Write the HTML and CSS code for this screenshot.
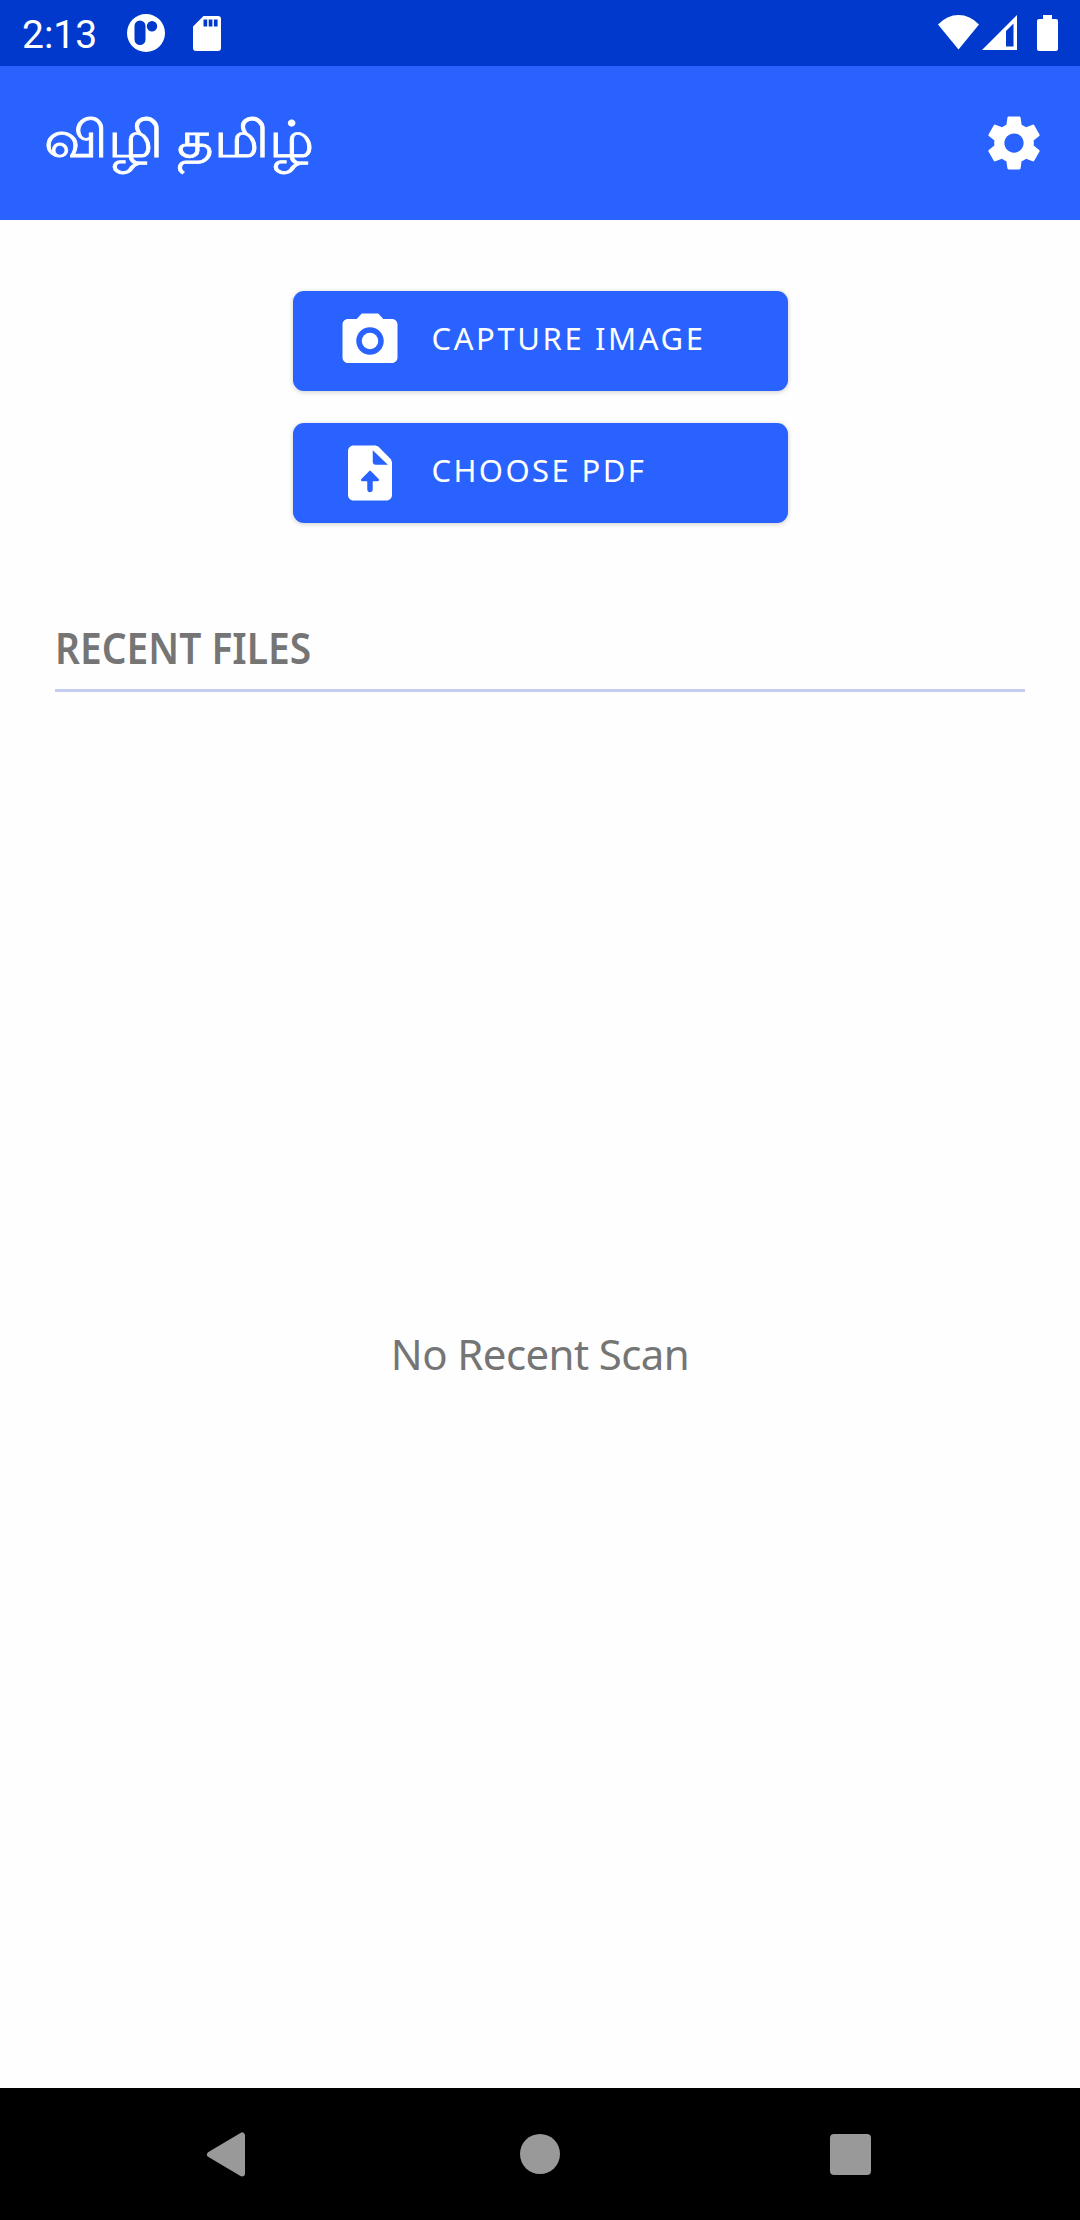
FILE: index.html
```html
<!DOCTYPE html>
<html lang="ta">
<head>
<meta charset="utf-8">
<title>விழி தமிழ்</title>
<link rel="stylesheet" href="styles.css">
</head>
<body>
<div class="screen">
  <div class="status-bar">
    <span class="clock">2:13</span>
    <svg class="status-app" viewBox="0 0 38 38"><path fill="#fff" fill-rule="evenodd" d="M19 0a19 19 0 1 1 0 38a19 19 0 1 1 0-38zM13 6.5a5.5 5.5 0 0 0-5.500 5.500v13.500a5.500 5.500 0 0 0 11 0v-13.500a5.500 5.500 0 0 0-5.500-5.500zM25 7a5.200 5.200 0 1 0 0 10.400a5.200 5.200 0 1 0 0-10.400z"/></svg>
    <svg class="status-card" viewBox="0 0 28 35"><path fill="#fff" fill-rule="evenodd" d="M10.500 0H25a3 3 0 0 1 3 3v29a3 3 0 0 1-3 3H3a3 3 0 0 1-3-3V10.500zM10.500 3.500v7h3.700v-7zM15.700 3.500v7h3.700v-7zM20.900 3.500v7h3.700v-7z"/></svg>
    <span class="spacer"></span>
    <svg class="wifi" viewBox="0 0 41 35"><path fill="#fff" d="M0 9.500Q9 0 20.500 0T41 9.500L20.500 34.500z"/></svg>
    <svg class="signal" viewBox="0 0 35 35"><path fill="#fff" fill-rule="evenodd" d="M35 0v35H0zM31.500 8.500l-7.500 7.500v15.500h7.500z"/></svg>
    <svg class="battery" viewBox="0 0 21 36"><path fill="#fff" d="M6 0h9v4h4a2 2 0 0 1 2 2v28a2 2 0 0 1-2 2H2a2 2 0 0 1-2-2V6a2 2 0 0 1 2-2h4z"/></svg>
  </div>

  <header class="app-bar">
    <h1 class="app-title">விழி தமிழ்</h1>
    <svg class="icon" viewBox="0 0 24 24"><path fill="#fff" d="M19.140 12.940c.040-.3.060-.61.060-.94 0-.32-.020-.64-.070-.94l2.030-1.580c.18-.14.23-.41.120-.61l-1.920-3.320c-.12-.22-.37-.29-.59-.22l-2.390.96c-.5-.38-1.030-.7-1.620-.94l-.36-2.540c-.040-.24-.24-.41-.48-.41h-3.840c-.24 0-.43.17-.47.41l-.36 2.540c-.59.24-1.130.57-1.620.94l-2.390-.96c-.22-.080-.47 0-.59.22L2.740 8.870c-.12.21-.080.47.120.61l2.030 1.580c-.050.3-.090.63-.090.94s.020.64.070.94l-2.030 1.580c-.18.14-.23.41-.12.61l1.920 3.320c.12.22.37.29.59.22l2.390-.96c.5.38 1.030.7 1.620.94l.36 2.540c.050.24.24.41.48.41h3.840c.24 0 .44-.17.47-.41l.36-2.540c.59-.24 1.130-.56 1.620-.94l2.390.96c.22.080.47 0 .59-.22l1.920-3.320c.12-.22.070-.47-.12-.61l-2.010-1.580zM12 15.500c-1.930 0-3.500-1.570-3.500-3.500s1.570-3.500 3.500-3.500 3.500 1.570 3.500 3.500-1.570 3.500-3.500 3.500z"/></svg>
  </header>

  <main class="content">
    <div class="actions">
      <button class="action">
        <svg class="icon" viewBox="0 0 24 24"><circle cx="12" cy="12" r="3" fill="#fff"/><path fill="#fff" d="M9 2L7.170 4H4c-1.100 0-2 .9-2 2v12c0 1.100.9 2 2 2h16c1.100 0 2-.9 2-2V6c0-1.100-.9-2-2-2h-3.170L15 2H9zm3 15c-2.760 0-5-2.240-5-5s2.240-5 5-5 5 2.240 5 5-2.240 5-5 5z"/></svg>
        <span class="action-label">CAPTURE IMAGE</span>
      </button>
      <button class="action">
        <svg class="icon" viewBox="0 0 24 24"><path fill="#fff" d="M14 2H6c-1.100 0-1.990.9-1.990 2L4 20c0 1.100.89 2 1.990 2H18c1.100 0 2-.9 2-2V8l-6-6zm-1 6V3.700L18.500 9H14c-.55 0-1-.45-1-1zM13 15v3c0 .55-.45 1-1 1s-1-.45-1-1v-3H9.210c-.45 0-.67-.54-.35-.85l2.800-2.790c.2-.19.510-.19.710 0l2.790 2.790c.3.310.080.850-.37.850H13z"/><path fill="#fff" d="M14 2l1 .4L19.600 7 20 8.500h-1.500L13 3z"/></svg>
        <span class="action-label choose">CHOOSE PDF</span>
      </button>
    </div>
    <h2 class="section-title"><span class="section-label">RECENT FILES</span></h2>
    <div class="empty"><p class="empty-text">No Recent Scan</p></div>
  </main>

  <nav class="nav-bar">
    <svg class="nav-icon" viewBox="0 0 60 60"><path fill="#999" stroke="#999" stroke-width="6" stroke-linejoin="round" d="M14 30.500L46 11.500v38z"/></svg>
    <svg class="nav-icon" viewBox="0 0 60 60"><circle cx="30" cy="30" r="20" fill="#999"/></svg>
    <svg class="nav-icon" viewBox="0 0 60 60"><rect x="9" y="10" width="41" height="41" rx="4" fill="#999"/></svg>
  </nav>
</div>
</body>
</html>
```
FILE: styles.css
```css
* { box-sizing: border-box; }

body {
  margin: 0;
  background: #fefefe;
  font-family: "Noto Sans", sans-serif;
}

h1, h2, p { margin: 0; font-weight: 400; }
svg { display: block; flex: none; }

.screen {
  width: 1080px;
  height: 2220px;
  display: flex;
  flex-direction: column;
}

.status-bar {
  height: 66px;
  display: flex;
  align-items: flex-start;
  padding: 14px 22px 0;
  background: #0039cb;
  color: #fff;
}
.clock {
  width: 105px;
  font: 400 39px/42px Roboto, sans-serif;
}
.status-app { width: 38px; height: 38px; }
.status-card { width: 28px; height: 35px; margin: 2px 0 0 28px; }
.spacer { flex: 1; }
.wifi { width: 41px; height: 35px; margin-top: 1px; }
.signal { width: 35px; height: 35px; margin: 1px 20px 0 3px; }
.battery { width: 21px; height: 36px; margin-top: 1px; }

.app-bar {
  height: 154px;
  display: flex;
  align-items: center;
  justify-content: space-between;
  padding: 0 33px 0 44px;
  background: #2962ff;
  color: #fff;
}
.app-title {
  padding-bottom: 13px;
  font-size: 51px;
  line-height: 80px;
  transform: scaleX(1.1);
  transform-origin: left;
  -webkit-text-stroke: .8px #fff;
}
.icon { width: 66px; height: 66px; }

.content {
  flex: 1;
  display: flex;
  flex-direction: column;
  padding: 71px 55px 0;
}
.actions {
  display: flex;
  flex-direction: column;
  align-items: center;
  gap: 32px;
}
.action {
  width: 495px;
  height: 100px;
  display: flex;
  align-items: center;
  gap: 29px;
  padding: 0 0 0 44px;
  border: 0;
  border-radius: 11px;
  background: #2962ff;
  color: #fff;
  font: 400 31px/40px "Noto Sans", sans-serif;
  box-shadow: 0 1px 5px rgba(0, 0, 0, .2);
}
.action-label { letter-spacing: 2.600px; padding-bottom: 6px; }
.choose { letter-spacing: 2.400px; }

.section-title {
  height: 101px;
  margin-top: 68px;
  padding-top: 27px;
  border-bottom: 3px solid #c5cdf0;
  color: #757575;
  font-size: 43px;
  font-weight: 600;
  line-height: 60px;
}
.section-label {
  display: inline-block;
  transform: scaleX(.905);
  transform-origin: left;
}

.empty {
  flex: 1;
  display: flex;
  justify-content: center;
  align-items: center;
  padding-bottom: 72px;
}
.empty-text {
  color: #757575;
  font-size: 42px;
  line-height: 60px;
  letter-spacing: -.6px;
}

.nav-bar {
  height: 132px;
  display: flex;
  justify-content: space-between;
  padding: 36px 199px 0 196px;
  background: #000;
}
.nav-icon { width: 60px; height: 60px; }
.nav-icon:nth-child(2) { margin-left: 3px; }
```
